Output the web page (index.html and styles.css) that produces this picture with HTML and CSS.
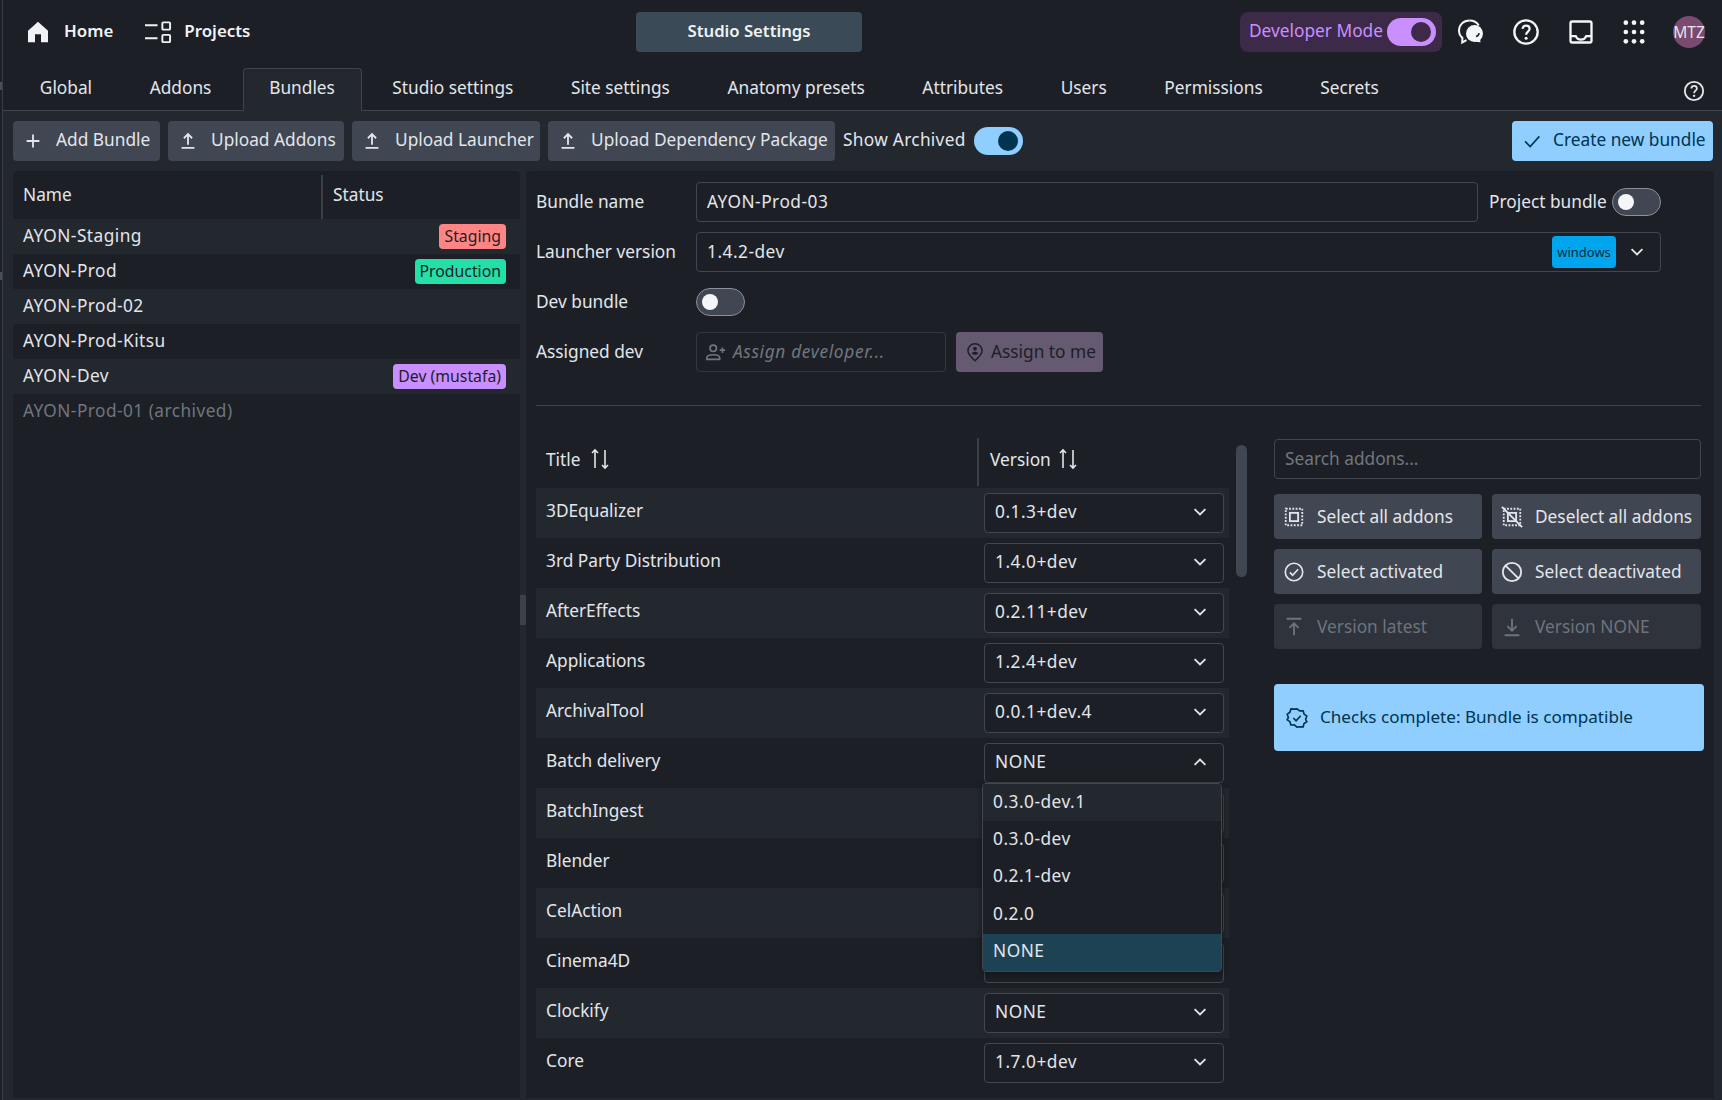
FILE: index.html
```html
<!DOCTYPE html>
<html lang="en">
<head>
    <meta charset="UTF-8">
    <title>Studio Settings</title>
    <link rel="stylesheet" href="styles.css">
</head>
<body>
    <svg class="icon-defs" width="0" height="0">
        <symbol id="i-chevron" viewBox="0 0 24 24"><path d="M5.500 8.500 12 15l6.500-6.500" fill="none" stroke="currentColor" stroke-width="2.200"/></symbol>
        <symbol id="i-upload" viewBox="0 0 24 24"><path d="M12 16V4.500M7.500 9 12 4.500 16.500 9M5 19.500h14" fill="none" stroke="currentColor" stroke-width="2"/></symbol>
        <symbol id="i-sort" viewBox="0 0 24 24"><path d="M7 21V3M4 6l3-3 3 3M17 3v18M14 18l3 3 3-3" fill="none" stroke="currentColor" stroke-width="1.600"/></symbol>
        <symbol id="i-help" viewBox="0 0 24 24"><circle cx="12" cy="12" r="10" fill="none" stroke="currentColor" stroke-width="2"/><path d="M9 9.300c.3-1.700 1.500-2.800 3.100-2.800 1.700 0 3 1.100 3 2.700 0 2.400-3 2.500-3 5.200" fill="none" stroke="currentColor" stroke-width="1.900"/><circle cx="12.100" cy="17.300" r="1.300" fill="currentColor"/></symbol>
    </svg>

    <span class="edge-mark edge-top"></span>
    <span class="edge-mark edge-mid"></span>

    <div class="app">
        <header class="topbar">
            <nav class="topnav">
                <a class="navlink">
                    <svg class="icon-home" viewBox="2 1.500 20 20.500"><path d="M2 22V10.500L12 1.500l10 9V22h-7v-8H9v8z" fill="currentColor"/></svg>
                    Home
                </a>
                <a class="navlink">
                    <svg class="icon-projects" viewBox="0 0 28 24" fill="none" stroke="currentColor" stroke-width="2"><path d="M0 5h13M0 18.500h13"/><rect x="18" y="2" width="8" height="7.500" rx="1"/><rect x="18" y="15" width="8" height="7.500" rx="1"/></svg>
                    Projects
                </a>
            </nav>
            <button class="studio-btn">Studio Settings</button>
            <div class="topbar-right">
                <div class="dev-pill">
                    <span>Developer Mode</span>
                    <span class="toggle toggle-dev"></span>
                </div>
                <svg class="top-icon" viewBox="0 0 28 28"><path d="M12.500 2.500C6.500 2.500 2 6.800 2 12.500c0 3 1.300 5.600 3.400 7.300l-.2 4.700 4.300-2.300" fill="none" stroke="currentColor" stroke-width="2"/><path d="M12.500 2.500c4 0 7.500 2 9.300 5" fill="none" stroke="currentColor" stroke-width="2"/><circle cx="17.500" cy="15.500" r="8.500" fill="currentColor"/><path d="M23 19.500c-1 2.500-3 4-5.500 4.300l6 .4z" fill="currentColor"/><path d="M19 18.500c2-.5 3-2 3-3.500" fill="none" stroke="#1c2026" stroke-width="1.500"/></svg>
                <svg class="top-icon"><use href="#i-help"/></svg>
                <svg class="top-icon" viewBox="0 0 24 24" fill="none" stroke="currentColor" stroke-width="2"><rect x="3" y="3" width="18" height="18" rx="1.500"/><path d="M3 15.500h4.500c.8 2 2.400 3 4.500 3s3.700-1 4.500-3H21"/></svg>
                <svg class="top-icon icon-apps" viewBox="0 0 24 24" fill="currentColor"><circle cx="5" cy="4" r="2"/><circle cx="12" cy="4" r="2"/><circle cx="19" cy="4" r="2"/><circle cx="5" cy="12" r="2"/><circle cx="12" cy="12" r="2"/><circle cx="19" cy="12" r="2"/><circle cx="5" cy="20" r="2"/><circle cx="12" cy="20" r="2"/><circle cx="19" cy="20" r="2"/></svg>
                <div class="avatar">MTZ</div>
            </div>
        </header>

        <div class="tabs">
            <a class="tab">Global</a>
            <a class="tab">Addons</a>
            <a class="tab active">Bundles</a>
            <a class="tab">Studio settings</a>
            <a class="tab">Site settings</a>
            <a class="tab">Anatomy presets</a>
            <a class="tab">Attributes</a>
            <a class="tab">Users</a>
            <a class="tab">Permissions</a>
            <a class="tab">Secrets</a>
            <svg class="tabs-help"><use href="#i-help"/></svg>
        </div>

        <main class="content">
            <div class="toolbar">
                <button class="btn btn-add">
                    <svg class="btn-icon" viewBox="0 0 24 24"><path d="M12 5v14M5 12h14" fill="none" stroke="currentColor" stroke-width="2"/></svg>
                    Add Bundle
                </button>
                <button class="btn btn-up-addons"><svg class="btn-icon"><use href="#i-upload"/></svg>Upload Addons</button>
                <button class="btn btn-up-launcher"><svg class="btn-icon"><use href="#i-upload"/></svg>Upload Launcher</button>
                <button class="btn btn-up-dep"><svg class="btn-icon"><use href="#i-upload"/></svg>Upload Dependency Package</button>
                <span class="archived">Show Archived</span>
                <span class="toggle toggle-on"></span>
                <button class="btn btn-primary">
                    <svg class="btn-icon" viewBox="0 0 24 24"><path d="M4.500 12.500 10 18 20 7" fill="none" stroke="currentColor" stroke-width="1.800"/></svg>
                    Create new bundle
                </button>
            </div>

            <div class="panels">
                <section class="bundle-list">
                    <div class="list-head">
                        <div class="list-name">Name</div>
                        <div class="list-status">Status</div>
                    </div>
                    <div class="list-row">AYON-Staging <span class="tag tag-staging">Staging</span></div>
                    <div class="list-row">AYON-Prod <span class="tag tag-prod">Production</span></div>
                    <div class="list-row">AYON-Prod-02</div>
                    <div class="list-row">AYON-Prod-Kitsu</div>
                    <div class="list-row">AYON-Dev <span class="tag tag-dev">Dev (mustafa)</span></div>
                    <div class="list-row archived-row">AYON-Prod-01 (archived)</div>
                </section>

                <div class="splitter"><span class="splitter-handle"></span></div>

                <section class="detail">
                    <div class="form">
                        <label class="form-label">Bundle name</label>
                        <div class="form-field">
                            <div class="input input-name">AYON-Prod-03</div>
                            <span class="project-label">Project bundle</span>
                            <span class="toggle toggle-off"></span>
                        </div>
                        <label class="form-label">Launcher version</label>
                        <div class="form-field">
                            <div class="input input-launcher">
                                <span class="input-text">1.4.2-dev</span>
                                <span class="tag-platform">windows</span>
                                <svg class="chevron"><use href="#i-chevron"/></svg>
                            </div>
                        </div>
                        <label class="form-label">Dev bundle</label>
                        <div class="form-field">
                            <span class="toggle toggle-off"></span>
                        </div>
                        <label class="form-label">Assigned dev</label>
                        <div class="form-field">
                            <div class="input input-assign">
                                <svg class="assign-icon" viewBox="0 0 24 24" fill="none" stroke="currentColor" stroke-width="1.800"><circle cx="9" cy="8" r="3.500"/><path d="M2 20v-1.500c0-2 3-3.500 7-3.500s7 1.500 7 3.500V20z"/><path d="M19 7v6M16 10h6"/></svg>
                                <em>Assign developer...</em>
                            </div>
                            <button class="assign-btn">
                                <svg class="pin-icon" viewBox="0 0 24 24"><path d="M12 22.500C7 18 3.500 14.500 3.500 10.500a8.500 8.500 0 0 1 17 0c0 4-3.500 7.500-8.500 12z" fill="none" stroke="currentColor" stroke-width="1.800"/><circle cx="12" cy="8" r="2.200" fill="currentColor"/><path d="M8 13.500c1-1.200 2.500-1.800 4-1.800s3 .6 4 1.800c-1 1.200-2.500 1.800-4 1.800s-3-.6-4-1.800z" fill="currentColor"/></svg>
                                Assign to me
                            </button>
                        </div>
                    </div>

                    <hr class="divider">

                    <div class="addons">
                        <div class="addon-table">
                            <div class="table-head">
                                <div class="head-title">Title <svg class="sort-icon"><use href="#i-sort"/></svg></div>
                                <div class="head-version">Version <svg class="sort-icon"><use href="#i-sort"/></svg></div>
                            </div>
                            <div class="addon-row"><span class="addon-title">3DEqualizer</span><div class="select">0.1.3+dev<svg class="chevron"><use href="#i-chevron"/></svg></div></div>
                            <div class="addon-row"><span class="addon-title">3rd Party Distribution</span><div class="select">1.4.0+dev<svg class="chevron"><use href="#i-chevron"/></svg></div></div>
                            <div class="addon-row"><span class="addon-title">AfterEffects</span><div class="select">0.2.11+dev<svg class="chevron"><use href="#i-chevron"/></svg></div></div>
                            <div class="addon-row"><span class="addon-title">Applications</span><div class="select">1.2.4+dev<svg class="chevron"><use href="#i-chevron"/></svg></div></div>
                            <div class="addon-row"><span class="addon-title">ArchivalTool</span><div class="select">0.0.1+dev.4<svg class="chevron"><use href="#i-chevron"/></svg></div></div>
                            <div class="addon-row">
                                <span class="addon-title">Batch delivery</span>
                                <div class="select">NONE<svg class="chevron chevron-up"><use href="#i-chevron"/></svg></div>
                                <div class="menu">
                                    <div class="menu-item hover">0.3.0-dev.1</div>
                                    <div class="menu-item">0.3.0-dev</div>
                                    <div class="menu-item">0.2.1-dev</div>
                                    <div class="menu-item">0.2.0</div>
                                    <div class="menu-item selected">NONE</div>
                                </div>
                            </div>
                            <div class="addon-row"><span class="addon-title">BatchIngest</span><div class="select"></div></div>
                            <div class="addon-row"><span class="addon-title">Blender</span><div class="select"></div></div>
                            <div class="addon-row"><span class="addon-title">CelAction</span><div class="select"></div></div>
                            <div class="addon-row"><span class="addon-title">Cinema4D</span><div class="select"></div></div>
                            <div class="addon-row"><span class="addon-title">Clockify</span><div class="select">NONE<svg class="chevron"><use href="#i-chevron"/></svg></div></div>
                            <div class="addon-row"><span class="addon-title">Core</span><div class="select">1.7.0+dev<svg class="chevron"><use href="#i-chevron"/></svg></div></div>
                        </div>
                        <div class="scrollbar"></div>

                        <aside class="side">
                            <div class="input input-search">Search addons...</div>
                            <div class="side-buttons">
                                <button class="side-btn">
                                    <svg class="side-icon" viewBox="0 0 24 24" fill="none" stroke="currentColor" stroke-width="2"><rect x="3" y="3" width="18" height="18" stroke-dasharray="2 1.600"/><rect x="7.500" y="7.500" width="9" height="9"/></svg>
                                    Select all addons
                                </button>
                                <button class="side-btn">
                                    <svg class="side-icon" viewBox="0 0 24 24" fill="none" stroke="currentColor" stroke-width="2"><rect x="3" y="3" width="18" height="18" stroke-dasharray="2 1.600"/><rect x="7.500" y="7.500" width="9" height="9"/><path d="M1 1l22 22"/></svg>
                                    Deselect all addons
                                </button>
                                <button class="side-btn">
                                    <svg class="side-icon" viewBox="0 0 24 24" fill="none" stroke="currentColor" stroke-width="1.800"><circle cx="12" cy="12" r="9.500"/><path d="M7.500 12.500 10.500 15.500 16.500 9"/></svg>
                                    Select activated
                                </button>
                                <button class="side-btn">
                                    <svg class="side-icon" viewBox="0 0 24 24" fill="none" stroke="currentColor" stroke-width="2"><circle cx="12" cy="12" r="10"/><path d="M5 5l14 14"/></svg>
                                    Select deactivated
                                </button>
                                <button class="side-btn disabled">
                                    <svg class="side-icon" viewBox="0 0 24 24" fill="none" stroke="currentColor" stroke-width="2"><path d="M4 3h16M12 21V8M7 13l5-5 5 5"/></svg>
                                    Version latest
                                </button>
                                <button class="side-btn disabled">
                                    <svg class="side-icon" viewBox="0 0 24 24" fill="none" stroke="currentColor" stroke-width="2"><path d="M4 21h16M12 3v13M7 11l5 5 5-5"/></svg>
                                    Version NONE
                                </button>
                            </div>
                            <div class="alert">
                                <svg class="alert-icon" viewBox="0 0 24 24" fill="none" stroke="currentColor" stroke-width="1.800"><path d="M12 2l3 2.300 3.700-.2 1 3.600 3 2.200-1.300 3.500 1.300 2.600-3 2-1 3.600-3.700-.1L12 22l-3-2.500-3.700.1-1-3.600-3-2 1.300-2.600-1.300-3.500 3-2.200 1-3.600 3.700.2z"/><path d="M8 12l3 3 5-5.500"/></svg>
                                Checks complete: Bundle is compatible
                            </div>
                        </aside>
                    </div>
                </section>
            </div>
        </main>
    </div>
</body>
</html>
```
FILE: styles.css
```css
* {
    box-sizing: border-box;
}
html, body {
    margin: 0;
    height: 100%;
}
body {
    font-family: "Noto Sans", "Open Sans", sans-serif;
    font-size: 17.3px;
    color: #e2e5ea;
    background-color: #1c2026;
    overflow: hidden;
}
button {
    font: inherit;
    border: none;
    color: inherit;
    cursor: pointer;
}
.icon-defs {
    position: absolute;
}
.edge-mark {
    position: absolute;
    left: 0;
    width: 2px;
    height: 8px;
    background-color: #4a4e55;
}
.edge-top {
    top: 82px;
}
.edge-mid {
    top: 272px;
}
.app {
    height: 1100px;
    margin-left: 2px;
    border-left: 1px solid #3a3f47;
    display: flex;
    flex-direction: column;
}

/* top bar */
.topbar {
    height: 68px;
    flex: none;
    padding-top: 12px;
    display: flex;
    align-items: flex-start;
}
.topnav {
    width: 633px;
    height: 40px;
    padding-left: 25px;
    display: flex;
    align-items: center;
    gap: 32px;
}
.navlink {
    padding-bottom: 4px;
    display: flex;
    align-items: center;
    gap: 12px;
    font-size: 16.900px;
    font-weight: 600;
    color: #f0f2f5;
}
.navlink svg {
    margin-top: 4px;
}
.icon-home {
    width: 20px;
    height: 22px;
    margin-right: 4px;
}
.icon-projects {
    width: 27px;
    height: 24px;
}
.studio-btn {
    width: 226px;
    height: 40px;
    padding-bottom: 4px;
    background-color: #3a4a56;
    border-radius: 4px;
    font-size: 16.700px;
    font-weight: 600;
    color: #f0f2f5;
}
.topbar-right {
    margin-left: auto;
    height: 40px;
    padding-right: 17px;
    display: flex;
    align-items: center;
}
.dev-pill {
    width: 202px;
    height: 40px;
    padding: 0 6px 4px 9px;
    border-radius: 8px;
    background-color: #3c2a48;
    color: #c98fff;
    display: flex;
    align-items: center;
    justify-content: space-between;
}
.dev-pill .toggle {
    margin-top: 4px;
}
.top-icon {
    width: 28px;
    height: 28px;
    margin-left: 27px;
    color: #f4f6f8;
    flex: none;
}
.dev-pill + .top-icon {
    margin-left: 15px;
}
.top-icon.icon-apps {
    margin-left: 25px;
}
.avatar {
    width: 32px;
    height: 32px;
    margin-left: 25px;
    border-radius: 50%;
    background-color: #7a4a70;
    font-size: 15.500px;
    display: flex;
    align-items: center;
    justify-content: center;
}

/* tabs */
.tabs {
    height: 43px;
    flex: none;
    padding-left: 8px;
    border-bottom: 1px solid #3f444c;
    display: flex;
    align-items: stretch;
}
.tab {
    padding: 0 27.800px 4px;
    margin-bottom: -1px;
    border: 1px solid transparent;
    border-radius: 4px 4px 0 0;
    display: flex;
    align-items: center;
}
.tab.active {
    margin-left: 3px;
    margin-right: 2px;
    padding-left: 25px;
    padding-right: 25.600px;
    background-color: #23272e;
    border-color: #3f444c;
    border-bottom-color: #23272e;
}
.tabs-help {
    width: 22px;
    height: 22px;
    margin: 12px 17px 0 auto;
}

/* toolbar */
.content {
    flex: 1;
    min-height: 0;
    background-color: #23272e;
    display: flex;
    flex-direction: column;
}
.toolbar {
    height: 60px;
    flex: none;
    padding: 10px 9px 0 10px;
    display: flex;
    align-items: flex-start;
    gap: 8px;
}
.btn {
    height: 40px;
    background-color: #404652;
    border-radius: 4px;
    padding: 0 0 4px 9px;
    display: flex;
    align-items: center;
    gap: 12px;
    white-space: nowrap;
}
.btn-icon {
    width: 22px;
    height: 22px;
    flex: none;
    margin-top: 4px;
}
.btn-add {
    width: 147px;
}
.btn-up-addons {
    width: 176px;
}
.btn-up-launcher {
    width: 188px;
}
.btn-up-dep {
    width: 287px;
}
.archived {
    margin-top: 7px;
    letter-spacing: 0.3px;
}
.toggle {
    display: inline-block;
    position: relative;
    width: 49px;
    height: 28px;
    border-radius: 14px;
    flex: none;
}
.toggle::after {
    content: "";
    position: absolute;
    border-radius: 50%;
}
.toggle-on {
    margin-top: 6px;
    background-color: #8fceff;
}
.toggle-on::after {
    width: 20px;
    height: 20px;
    top: 4px;
    right: 5px;
    background-color: #00344f;
}
.toggle-dev {
    background-color: #c98fff;
}
.toggle-dev::after {
    width: 20px;
    height: 20px;
    top: 4px;
    right: 5px;
    background-color: #3c2a48;
}
.toggle-off {
    background-color: #404652;
    border: 1px solid #8a8f99;
}
.toggle-off::after {
    width: 16px;
    height: 16px;
    top: 5px;
    left: 5px;
    background-color: #f4f6f8;
}
.btn-primary {
    width: 201px;
    margin-left: auto;
    padding-left: 9px;
    background-color: #8fceff;
    color: #00344f;
    gap: 10px;
}

/* panels */
.panels {
    height: 927px;
    flex: none;
    padding: 0 9px 0 10px;
    display: flex;
}
.bundle-list {
    width: 507px;
    flex: none;
    background-color: #1c2026;
    border-radius: 4px 4px 0 0;
}
.list-head {
    height: 48px;
    display: flex;
}
.list-name {
    width: 308px;
    padding: 0 0 2px 10px;
    display: flex;
    align-items: center;
}
.list-status {
    flex: 1;
    margin-top: 4px;
    padding: 0 0 6px 10px;
    border-left: 2px solid #3a3f47;
    display: flex;
    align-items: center;
}
.list-row {
    height: 35px;
    padding: 0 14px 2px 10px;
    display: flex;
    align-items: center;
    justify-content: space-between;
    letter-spacing: 0.45px;
}
.list-row:nth-child(even) {
    background-color: #23272e;
}
.archived-row {
    color: #70757d;
}
.tag {
    height: 25px;
    margin-top: 2px;
    padding: 0 5px 2px;
    border-radius: 4px;
    font-size: 15.800px;
    letter-spacing: 0;
    color: #1c2026;
    display: flex;
    align-items: center;
}
.tag-staging {
    background-color: #ff8585;
}
.tag-prod {
    background-color: #23e0a9;
}
.tag-dev {
    background-color: #c98fff;
}
.splitter {
    width: 6px;
    flex: none;
    display: flex;
    align-items: center;
}
.splitter-handle {
    width: 6px;
    height: 30px;
    margin-top: -50px;
    background-color: #3c4047;
}
.detail {
    flex: 1;
    background-color: #1c2026;
    border-radius: 4px 4px 0 0;
    padding: 11px 10px 0;
}

/* bundle form */
.form {
    display: grid;
    grid-template-columns: 160px 1fr;
    grid-auto-rows: 40px;
    row-gap: 10px;
    align-items: center;
}
.form-label {
    padding-bottom: 1px;
}
.form-field {
    display: flex;
    align-items: center;
    height: 40px;
}
.input {
    height: 40px;
    border: 1px solid #41474f;
    border-radius: 4px;
    padding: 0 10px 1px;
    display: flex;
    align-items: center;
}
.input-name {
    width: 782px;
    letter-spacing: 0.5px;
}
.project-label {
    margin-left: 11px;
    margin-right: 5px;
    padding-bottom: 1px;
}
.input-launcher {
    width: 965px;
    padding: 0 13px 2px 10px;
}
.input-text {
    flex: 1;
    letter-spacing: 0.5px;
}
.tag-platform {
    height: 32px;
    width: 64px;
    margin: 2px 11px 0 0;
    border-radius: 4px;
    background-color: #00a6ed;
    color: #0a2a3e;
    font-size: 13px;
    display: flex;
    align-items: center;
    justify-content: center;
}
.chevron {
    width: 20px;
    height: 20px;
    flex: none;
    margin-top: 2px;
}
.chevron-up {
    transform: rotate(180deg);
}
.input-assign {
    width: 250px;
    padding-left: 8px;
    border-color: #33383f;
    color: #71767e;
    gap: 6px;
    letter-spacing: 0.65px;
}
.assign-icon {
    width: 22px;
    height: 22px;
    margin-top: 1px;
}
.assign-btn {
    width: 147px;
    height: 40px;
    margin-left: 10px;
    border-radius: 4px;
    background-color: #665a72;
    color: #1c2026;
    padding: 0 0 1px 9px;
    display: flex;
    align-items: center;
    gap: 6px;
    white-space: nowrap;
}
.pin-icon {
    width: 20px;
    height: 22px;
    margin-top: 1px;
}
.divider {
    margin: 33px 3px 0 0;
    border: none;
    border-top: 1px solid #3f444c;
}

/* addons */
.addons {
    margin-top: 32px;
    display: flex;
    align-items: flex-start;
}
.addon-table {
    width: 693px;
    flex: none;
}
.table-head {
    height: 50px;
    padding-bottom: 2px;
    display: flex;
}
.head-title {
    width: 443px;
    padding: 0 0 6px 10px;
    border-right: 2px solid #3a3f47;
    display: flex;
    align-items: center;
    gap: 7px;
}
.head-version {
    padding: 0 0 6px 11px;
    display: flex;
    align-items: center;
    gap: 5px;
}
.sort-icon {
    width: 24px;
    height: 24px;
}
.addon-row {
    position: relative;
    height: 50px;
    padding: 0 5px 0 10px;
    display: flex;
    align-items: center;
    justify-content: space-between;
}
.addon-row:nth-child(even) {
    background-color: #23272e;
}
.addon-title {
    margin-top: -5px;
}
.select {
    width: 240px;
    height: 40px;
    border: 1px solid #41474f;
    border-radius: 4px;
    background-color: #1c2026;
    padding: 0 13px 4px 10px;
    display: flex;
    align-items: center;
    justify-content: space-between;
    letter-spacing: 0.5px;
}
.menu {
    position: absolute;
    top: 45px;
    left: 446px;
    width: 240px;
    z-index: 5;
    border: 1px solid #41474f;
    border-radius: 4px;
    background-color: #1c2026;
    overflow: hidden;
    box-shadow: 0 2px 6px rgba(0,0,0,0.4);
    letter-spacing: 0.5px;
}
.menu-item {
    height: 37.400px;
    padding: 0 10px 3px;
    display: flex;
    align-items: center;
}
.menu-item.hover {
    background-color: #23272e;
}
.menu-item.selected {
    background-color: #1d4254;
}
.scrollbar {
    width: 11px;
    height: 132px;
    margin: 7px 0 0 7px;
    flex: none;
    border-radius: 6px;
    background-color: #404652;
}

/* side panel */
.side {
    width: 430px;
    margin-left: 27px;
    flex: none;
}
.input-search {
    width: 427px;
    margin-top: 1px;
    color: #71767e;
}
.side-buttons {
    width: 427px;
    margin-top: 15px;
    display: grid;
    grid-template-columns: 208px 209px;
    grid-auto-rows: 45px;
    gap: 10px;
}
.side-btn {
    border-radius: 4px;
    background-color: #404652;
    padding: 0 0 1px 9px;
    display: flex;
    align-items: center;
    gap: 12px;
    white-space: nowrap;
}
.side-icon {
    width: 22px;
    height: 22px;
    flex: none;
    margin-top: 1px;
}
.side-btn.disabled {
    background-color: #2f343c;
    color: #6e737b;
}
.alert {
    height: 67px;
    margin-top: 35px;
    padding: 0 0 2px 12px;
    border-radius: 4px;
    background-color: #8fceff;
    color: #00344f;
    font-size: 17.100px;
    display: flex;
    align-items: center;
    gap: 12px;
}
.alert-icon {
    width: 22px;
    height: 22px;
    flex: none;
    margin-top: 2px;
}
```
